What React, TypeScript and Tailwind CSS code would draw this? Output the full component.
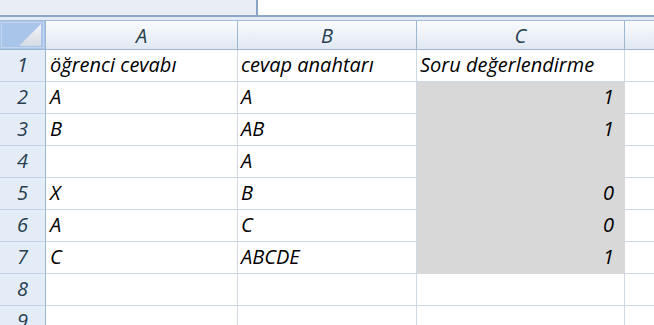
import React from 'react'

const COLS = ['A', 'B', 'C']

const ROWS: { a: string; b: string; c: string; fill: boolean }[] = [
  { a: 'öğrenci cevabı', b: 'cevap anahtarı', c: 'Soru değerlendirme', fill: false },
  { a: 'A', b: 'A', c: '1', fill: true },
  { a: 'B', b: 'AB', c: '1', fill: true },
  { a: '', b: 'A', c: '', fill: true },
  { a: 'X', b: 'B', c: '0', fill: true },
  { a: 'A', b: 'C', c: '0', fill: true },
  { a: 'C', b: 'ABCDE', c: '1', fill: true },
  { a: '', b: '', c: '', fill: false },
  { a: '', b: '', c: '', fill: false },
]

const font = { fontFamily: '"Open Sans", "Noto Sans", sans-serif' }

export default function App() {
  return (
    <div className="h-[325px] w-[654px] overflow-hidden bg-white italic" style={font}>
      {/* formula bar strip */}
      <div className="flex h-[15px]">
        <div className="w-[258px] border-r-2 border-[#8aa3c4] bg-[#e9eef6]" />
        <div className="flex-1 bg-white" />
      </div>
      <div className="h-[2px] bg-[#8ea6c6]" />
      <div className="h-[3px] bg-[#e2eaf5]" />
      <div className="h-px bg-[#a7bbd6]" />

      <div className="grid grid-cols-[46px_192px_179px_208px_1fr] grid-rows-[29px_repeat(9,32px)]">
        {/* corner */}
        <div className="relative border-r border-b border-[#9eb6ce] bg-[#a9c5ea] p-px">
          <div className="h-full w-full border border-[#c3d6f1]">
            <svg className="absolute right-[4px] bottom-[3px]" width="22" height="22" viewBox="0 0 22 22">
              <defs>
                <linearGradient id="tri" x1="0" y1="0" x2="0" y2="1">
                  <stop offset="0" stopColor="#f4f6f9" />
                  <stop offset="1" stopColor="#d5dbe3" />
                </linearGradient>
              </defs>
              <polygon points="22,0 22,22 0,22" fill="url(#tri)" />
            </svg>
          </div>
        </div>
        {COLS.map((c) => (
          <div
            key={c}
            className="flex items-center justify-center border-r border-b border-[#9eb6ce] bg-gradient-to-b from-[#f9fbfd] to-[#e1e8f3] pt-[2px] text-[20px] text-[#27404f]"
          >
            {c}
          </div>
        ))}
        <div className="border-b border-[#9eb6ce] bg-gradient-to-b from-[#f9fbfd] to-[#e1e8f3]" />

        {ROWS.map((r, i) => (
          <React.Fragment key={i}>
            <div className="flex items-end justify-center border-r border-b border-[#9eb6ce] border-b-[#c5d3e6] bg-[#e4ecf7] pb-[1px] text-[20px] text-[#27404f]">
              {i + 1}
            </div>
            <div className="flex items-end border-r border-b border-[#d0d7e5] pb-[1px] pl-[4px] text-[20px] text-black">
              {r.a}
            </div>
            <div className="flex items-end border-r border-b border-[#d0d7e5] pb-[1px] pl-[3px] text-[20px] text-black">
              {r.b}
            </div>
            <div
              className={`flex items-end border-r border-b pb-[1px] text-[20px] text-black ${
                r.fill ? 'justify-end border-[#d8d8d8] bg-[#d8d8d8] pr-[10px]' : 'border-[#d0d7e5] pl-[3px]'
              }`}
            >
              {r.c}
            </div>
            <div className="border-b border-[#d0d7e5]" />
          </React.Fragment>
        ))}
      </div>
    </div>
  )
}
